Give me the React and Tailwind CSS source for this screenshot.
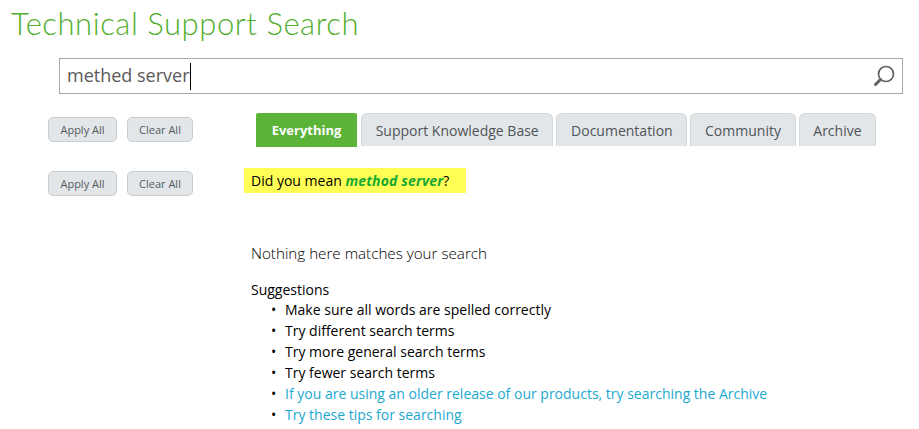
const TABS = ['Support Knowledge Base', 'Documentation', 'Community', 'Archive'];

const SUGGESTIONS = [
  { text: 'Make sure all words are spelled correctly' },
  { text: 'Try different search terms' },
  { text: 'Try more general search terms' },
  { text: 'Try fewer search terms' },
  { text: 'If you are using an older release of our products, try searching the Archive', link: true },
  { text: 'Try these tips for searching', link: true },
];

const FilterButtons = ({ className }) => (
  <div className={`flex gap-[10px] ${className}`}>
    <button className="w-[69px] h-[25px] pt-px rounded-[5px] border border-[#c9cdcf] bg-[#e2e6e8] text-[11px] text-[#555c60]">Apply All</button>
    <button className="w-[66px] h-[25px] pt-px rounded-[5px] border border-[#c9cdcf] bg-[#e2e6e8] text-[11px] text-[#555c60]">Clear All</button>
  </div>
);

export default function App() {
  return (
    <div className="w-[919px] h-[429px] overflow-hidden bg-white font-['Open_Sans',sans-serif]">
      <h1 className="pl-[11px] pt-[5px] h-[58px] font-['Lato',sans-serif] font-light text-[31px] leading-[36px] tracking-[0.55px] text-[#52ae2e]">
        Technical Support Search
      </h1>

      {/* Search box */}
      <div className="ml-[59px] w-[844px] h-[36px] border border-[#a9a9a9] flex items-center pl-[7px] pr-[6px]">
        <span className="pb-px text-[18px] text-[#5a5a5a]">methed server</span>
        <span className="w-px h-[27px] bg-black" />
        <svg className="ml-auto w-[24px] h-[24px] text-[#5f6362]" viewBox="0 0 24 24" fill="none" stroke="currentColor">
          <circle cx="14" cy="10" r="7.5" strokeWidth="1.7" />
          <path d="M8.5 15.5 L3.5 20.5" strokeWidth="3" strokeLinecap="round" />
        </svg>
      </div>

      <div className="flex">
        {/* Left filter column */}
        <div className="w-[244px] shrink-0 pl-[48px] pt-[23px]">
          <FilterButtons />
          <FilterButtons className="mt-[29px]" />
        </div>

        <div className="flex-1">
          {/* Tabs */}
          <div className="flex items-end gap-[3px] pl-[12px] pt-[19px]">
            <div className="h-[34px] w-[101px] mr-px pt-[2px] flex items-center justify-center rounded-t-[2px] bg-[#5bb337] text-[13px] font-bold text-white">
              Everything
            </div>
            {TABS.map((tab) => (
              <div key={tab} className="h-[33px] mb-[1px] px-[13.7px] flex items-center rounded-t-[6px] border border-b-0 border-[#d3d8da] bg-[#e2e6e8] text-[14px] text-[#505558]">
                {tab}
              </div>
            ))}
          </div>

          {/* Did you mean */}
          <div className="mt-[21px] w-[222px] h-[25px] pl-[7px] pb-px flex items-center bg-[#ffff55] text-[14px] text-black">
            Did you mean&nbsp;
            <span className="font-bold italic tracking-[0.15px] text-[#17a832]">method server</span>?
          </div>

          <div className="pl-[7px] text-black">
            <p className="mt-[49px] text-[15.2px] leading-[22px] font-light">Nothing here matches your search</p>
            <p className="mt-[17px] text-[14px] leading-[18px]">Suggestions</p>
            <ul className="text-[14px] leading-[21px]">
              {SUGGESTIONS.map((item) => (
                <li key={item.text} className="flex">
                  <span className="w-[34px] pl-[20px] shrink-0">•</span>
                  <span className={item.link ? 'text-[#1ba9cf]' : ''}>{item.text}</span>
                </li>
              ))}
            </ul>
          </div>
        </div>
      </div>
    </div>
  );
}
